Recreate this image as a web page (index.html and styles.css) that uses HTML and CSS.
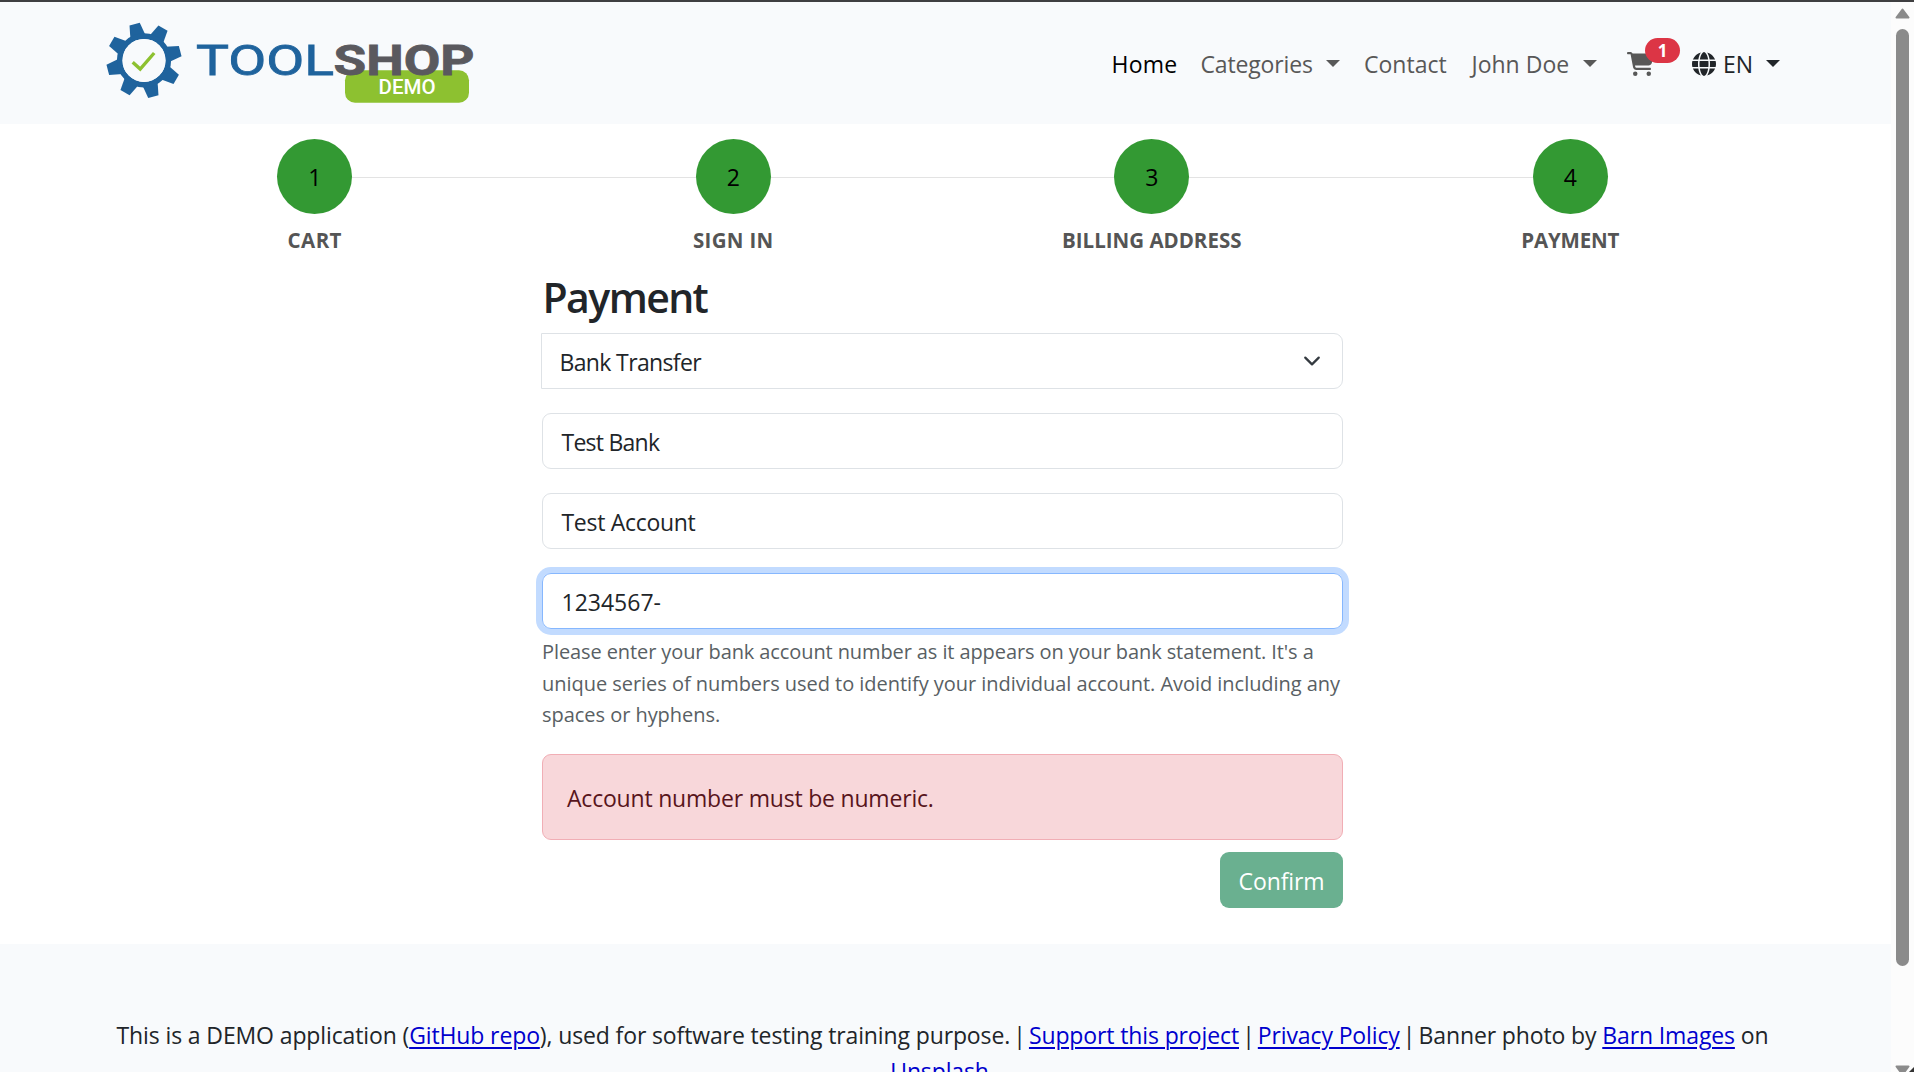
FILE: index.html
```html
<!DOCTYPE html>
<html lang="en">
<head>
<meta charset="utf-8">
<title>Payment - Toolshop</title>
<link rel="stylesheet" href="styles.css">
</head>
<body>
<div class="viewport">
  <div class="page">
    <header class="navbar">
      <a class="brand">
        <svg width="380" height="90" viewBox="15 18 380 90">
          <g transform="translate(54 60.4)" fill="#1f639d">
            <g id="teeth">
              <path transform="rotate(-14.5)" d="M-7.8 -24L-5.3 -37.4H5.3L7.8 -24z"/>
              <path transform="rotate(30.5)" d="M-7.8 -24L-5.3 -37.4H5.3L7.8 -24z"/>
              <path transform="rotate(75.5)" d="M-7.8 -24L-5.3 -37.4H5.3L7.8 -24z"/>
              <path transform="rotate(120.5)" d="M-7.8 -24L-5.3 -37.4H5.3L7.8 -24z"/>
              <path transform="rotate(165.5)" d="M-7.8 -24L-5.3 -37.4H5.3L7.8 -24z"/>
              <path transform="rotate(210.5)" d="M-7.8 -24L-5.3 -37.4H5.3L7.8 -24z"/>
              <path transform="rotate(255.5)" d="M-7.8 -24L-5.3 -37.4H5.3L7.8 -24z"/>
              <path transform="rotate(300.5)" d="M-7.8 -24L-5.3 -37.4H5.3L7.8 -24z"/>
            </g>
            <circle r="24.3" fill="none" stroke="#1f639d" stroke-width="5.6"/>
            <circle r="21.5" fill="#f8fafc"/>
          </g>
          <path d="M42.7 62.2L50.2 69L64.2 53" fill="none" stroke="#8dc130" stroke-width="3.4"/>
          <rect x="255" y="70.3" width="124" height="32.4" rx="10" fill="#8dc130"/>
          <text class="logo-tool" x="106" y="75.3" textLength="138" lengthAdjust="spacingAndGlyphs">TOOL</text>
          <text class="logo-shop" x="243.5" y="75.3" textLength="141" lengthAdjust="spacingAndGlyphs">SHOP</text>
          <text class="logo-demo" x="288.5" y="93.7" textLength="57" lengthAdjust="spacingAndGlyphs">DEMO</text>
        </svg>
      </a>
      <nav class="menu">
        <a class="item home">Home</a>
        <a class="item categories">Categories<i class="caret"></i></a>
        <a class="item contact">Contact</a>
        <a class="item user">John Doe<i class="caret"></i></a>
        <a class="item cart">
          <svg width="27" height="24" viewBox="0 0 576 512" fill="currentColor"><path d="M0 24C0 10.7 10.7 0 24 0H69.5c22 0 41.5 12.8 50.6 32h411c26.3 0 45.5 25 38.6 50.4l-41 152.3c-8.5 31.4-37 53.3-69.5 53.3H170.7l5.4 28.5c2.2 11.3 12.1 19.5 23.6 19.5H488c13.3 0 24 10.7 24 24s-10.7 24-24 24H199.7c-34.6 0-64.3-24.6-70.7-58.5L77.4 54.5c-.7-3.8-4-6.5-7.9-6.5H24C10.7 48 0 37.3 0 24zM128 464a48 48 0 1 1 96 0 48 48 0 1 1 -96 0zm336-48a48 48 0 1 1 0 96 48 48 0 1 1 0-96z"/></svg>
          <span class="badge">1</span>
        </a>
        <a class="item lang">
          <svg width="24" height="24" viewBox="0 0 512 512" fill="currentColor"><path d="M352 256c0 22.2-1.2 43.6-3.3 64H163.3c-2.2-20.4-3.3-41.8-3.3-64s1.2-43.6 3.3-64H348.7c2.2 20.4 3.3 41.8 3.3 64zm28.8-64H503.9c5.3 20.5 8.1 41.9 8.1 64s-2.8 43.5-8.1 64H380.8c2.1-20.6 3.2-42 3.2-64s-1.1-43.4-3.2-64zm112.6-32H376.7c-10-63.9-29.8-117.4-55.3-151.6c78.3 20.7 142 77.5 171.9 151.6zm-149.1 0H167.7c6.1-36.4 15.5-68.6 27-94.7c10.5-23.6 22.2-40.7 33.5-51.5C239.4 3.2 248.7 0 256 0s16.6 3.2 27.8 13.8c11.3 10.8 23 27.9 33.5 51.5c11.6 26 20.9 58.2 27 94.7zm-209 0H18.6C48.6 85.9 112.2 29.1 190.6 8.4C165.1 42.6 145.3 96.1 135.3 160zM8.1 192H131.2c-2.1 20.6-3.2 42-3.2 64s1.1 43.4 3.2 64H8.1C2.8 299.5 0 278.1 0 256s2.8-43.5 8.1-64zM194.7 446.6c-11.6-26-20.9-58.2-27-94.6H344.3c-6.1 36.4-15.5 68.6-27 94.6c-10.5 23.6-22.2 40.7-33.5 51.5C272.6 508.8 263.3 512 256 512s-16.6-3.2-27.8-13.8c-11.3-10.8-23-27.9-33.5-51.5zM135.3 352c10 63.9 29.8 117.4 55.3 151.6C112.2 482.9 48.6 426.1 18.6 352H135.3zm358.1 0c-30 74.1-93.6 130.9-171.9 151.6c25.5-34.2 45.2-87.7 55.3-151.6H493.4z"/></svg>
          <span class="lang-code">EN</span><i class="caret"></i>
        </a>
      </nav>
    </header>

    <main class="content">
      <ol class="steps">
        <li class="step"><span class="dot">1</span><span class="label label-cart">Cart</span></li>
        <li class="step"><span class="dot">2</span><span class="label label-signin">Sign in</span></li>
        <li class="step"><span class="dot">3</span><span class="label">Billing Address</span></li>
        <li class="step"><span class="dot">4</span><span class="label label-payment">Payment</span></li>
      </ol>
      <section class="payment">
        <h3 class="title">Payment</h3>
        <div class="field select">
          <span class="method">Bank Transfer</span>
          <svg class="chevron" width="18" height="18" viewBox="0 0 16 16"><path d="m2 5 6 6 6-6" fill="none" stroke="#343a40" stroke-width="2" stroke-linecap="round" stroke-linejoin="round"/></svg>
        </div>
        <div class="field bank">Test Bank</div>
        <div class="field account">Test Account</div>
        <div class="field number focused">1234567-</div>
        <p class="help"><span class="help-lead">Please enter your bank account number as it appears on your bank statement. It's a</span> unique series of numbers used to identify your individual account. Avoid including any spaces or hyphens.</p>
        <div class="alert">Account number must be numeric.</div>
        <div class="actions"><button class="confirm" disabled>Confirm</button></div>
      </section>
    </main>

    <footer class="footer">
      <p class="footer-text">This is a DEMO application (<a>GitHub repo</a>), used for software testing training purpose.<span class="sep"> | </span><a>Support this project</a><span class="sep"> | </span><a>Privacy Policy</a><span class="sep"> | </span>Banner photo by <a>Barn Images</a> on<br><a>Unsplash</a>.</p>
    </footer>
  </div>
  <div class="scrollbar">
    <svg width="15" height="11" viewBox="0 0 15 11"><path d="M7.5 1.5L13.5 9.5H1.5z" fill="#8b8b8b" stroke="#8b8b8b" stroke-width="2" stroke-linejoin="round"/></svg>
    <div class="thumb"></div>
    <svg class="down" width="15" height="11" viewBox="0 0 15 11"><path d="M7.5 9.5L13.5 1.5H1.5z" fill="#8b8b8b" stroke="#8b8b8b" stroke-width="2" stroke-linejoin="round"/></svg>
    <svg class="corner" width="5" height="5" viewBox="0 0 5 5"><path d="M5 0V5H0z" fill="#333"/></svg>
  </div>
</div>
</body>
</html>
```
FILE: styles.css
```css
* { box-sizing: border-box; }
body {
  margin: 0;
  font: 400 23px/36px "Open Sans", "Noto Sans", sans-serif;
  color: #212529;
  background: #fff;
}
.viewport {
  display: flex;
  height: 1072px;
  overflow: hidden;
  border-top: 2px solid #3f3f41;
}
.page { width: 1891px; height: 1070px; overflow: hidden; }

/* Navigation */
.navbar {
  display: flex;
  height: 122px;
  padding: 16px 111px 0 105px;
  background: #f8fafc;
}
.brand { width: 380px; height: 90px; }
.logo-tool { font: 400 43px Roboto, sans-serif; fill: #1f639d; stroke: #1f639d; stroke-width: .8px; }
.logo-shop { font: 700 43px Roboto, sans-serif; fill: #5a595e; stroke: #5a595e; stroke-width: .8px; }
.logo-demo { font: 500 20.5px Roboto, sans-serif; fill: #fff; }
.menu {
  display: flex;
  align-items: center;
  height: 36px;
  margin: 28px 0 0 auto;
  color: #585858;
}
.item { display: flex; align-items: center; white-space: nowrap; }
.caret {
  margin-left: auto;
  margin-top: -1px;
  border: 7px solid transparent;
  border-top-color: currentColor;
  border-bottom: 0;
}
.home { width: 89px; color: #000; letter-spacing: .25px; padding-left: 1px; }
.categories { width: 140.5px; letter-spacing: -.15px; padding-left: 1px; }
.contact { width: 108px; margin-left: 23px; padding-left: 1px; }
.user { width: 126px; padding-left: .5px; }
.cart { position: relative; width: 65px; margin-left: 30px; }
.lang { width: 88px; color: #212529; }
.lang-code { margin-left: 7px; }
.badge {
  position: absolute;
  left: 18px;
  top: -14px;
  width: 35px;
  height: 25px;
  border-radius: 13px;
  background: #dc3545;
  color: #fff;
  font-size: 17px;
  font-weight: 700;
  line-height: 25px;
  text-align: center;
}

/* Checkout steps */
.content { width: 1885px; height: 820px; padding-top: 15px; }
.steps {
  display: flex;
  width: 1674px;
  margin: 0 auto;
  padding: 0;
  list-style: none;
}
.step {
  display: flex;
  flex: 1;
  flex-direction: column;
  align-items: center;
  background: linear-gradient(#e3e3e3, #e3e3e3) 0 38px / 100% 1px no-repeat;
}
.step:first-child { background-position: 210px 38px; }
.step:last-child { background-size: 50% 1px; }
.dot {
  width: 75px;
  height: 75px;
  border-radius: 50%;
  background: #339933;
  color: #000;
  line-height: 76px;
  text-align: center;
}
.label {
  margin-top: 11px;
  font-size: 20.5px;
  font-weight: 700;
  line-height: 31px;
  color: #555;
  text-transform: uppercase;
}
.label-cart { letter-spacing: .42px; }
.label-signin { letter-spacing: .3px; }
.label-payment { letter-spacing: -.2px; }

/* Payment form */
.payment { width: 801px; margin: 16px auto 0; }
.title {
  margin: 0 0 11px;
  padding-left: .5px;
  font-size: 41px;
  font-weight: 600;
  line-height: 50px;
  letter-spacing: -1.6px;
}
.field {
  height: 56px;
  margin-bottom: 24px;
  padding: 10px 18px 0 18.5px;
  border: 1px solid #dee2e6;
  border-radius: 9px;
  line-height: 36px;
}
.select {
  display: flex;
  margin-left: -1px;
  padding-left: 17.5px;
  border-radius: 0 9px 9px 0;
}
.method { letter-spacing: -.64px; }
.chevron { margin: 8px 3px 0 auto; }
.bank { letter-spacing: -.75px; }
.account { letter-spacing: -.3px; }
.focused {
  margin-bottom: 0;
  border-color: #86b7fe;
  box-shadow: 0 0 0 6px #c2dbff;
}
.help {
  margin: 7px -3px 23px 0;
  font-size: 20px;
  line-height: 31.5px;
  letter-spacing: -.04px;
  color: #595f64;
}
.help-lead { letter-spacing: -.1px; }
.alert {
  height: 86px;
  padding: 25px 24px 0;
  border: 1px solid #f1aeb5;
  border-radius: 9px;
  background: #f8d7da;
  color: #58151c;
  letter-spacing: -.2px;
}
.actions { display: flex; justify-content: flex-end; margin-top: 12px; }
.confirm {
  width: 123px;
  height: 56px;
  padding: 3px 0 0;
  border: 0;
  border-radius: 9px;
  background: #6ab090;
  color: #fff;
  font: inherit;
  letter-spacing: -.1px;
}

/* Footer */
.footer { height: 140px; padding: 73px 6px 0 0; background: #f8fafc; }
.footer-text { margin: 0; text-align: center; white-space: nowrap; letter-spacing: -.125px; }
.sep { word-spacing: -2.7px; }
.footer a {
  color: #0000cd;
  text-decoration: underline;
  text-decoration-thickness: 2px;
  text-underline-offset: 3px;
}

/* Scrollbar */
.scrollbar {
  position: relative;
  display: flex;
  flex-direction: column;
  align-items: center;
  width: 23px;
  height: 1070px;
  padding: 6px 1px 0 0;
  background: #fcfcfc;
}
.scrollbar svg { flex: none; }
.thumb { flex: none; width: 13px; height: 937px; margin-top: 10px; border-radius: 7px; background: #8b8b8b; }
.down { margin-top: 99px; }
.corner { position: absolute; right: 0; bottom: 0; }
```
